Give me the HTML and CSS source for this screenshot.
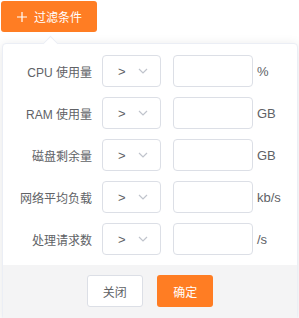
FILE: index.html
```html
<!DOCTYPE html>
<html lang="zh-CN">
<head>
    <meta charset="UTF-8">
    <title>过滤条件</title>
    <link rel="stylesheet" href="styles.css">
</head>
<body>
    <button class="btn-filter" type="button"><svg class="plus" width="10" height="10" viewBox="0 0 10 10"><path d="M5 0v10M0 5h10" stroke="#ffffff" stroke-width="1.2"/></svg>过滤条件</button>

    <div class="popover">
        <form class="filter-form">
            <div class="row">
                <label>CPU 使用量</label>
                <div class="select"><span>&gt;</span><svg width="10" height="6" viewBox="0 0 10 6"><path d="M1 1l4 4 4-4" fill="none" stroke="#c0c4cc" stroke-width="1.2"/></svg></div>
                <input type="text" class="value">
                <span class="unit">%</span>
            </div>
            <div class="row">
                <label>RAM 使用量</label>
                <div class="select"><span>&gt;</span><svg width="10" height="6" viewBox="0 0 10 6"><path d="M1 1l4 4 4-4" fill="none" stroke="#c0c4cc" stroke-width="1.2"/></svg></div>
                <input type="text" class="value">
                <span class="unit">GB</span>
            </div>
            <div class="row">
                <label>磁盘剩余量</label>
                <div class="select"><span>&gt;</span><svg width="10" height="6" viewBox="0 0 10 6"><path d="M1 1l4 4 4-4" fill="none" stroke="#c0c4cc" stroke-width="1.2"/></svg></div>
                <input type="text" class="value">
                <span class="unit">GB</span>
            </div>
            <div class="row">
                <label>网络平均负载</label>
                <div class="select"><span>&gt;</span><svg width="10" height="6" viewBox="0 0 10 6"><path d="M1 1l4 4 4-4" fill="none" stroke="#c0c4cc" stroke-width="1.2"/></svg></div>
                <input type="text" class="value">
                <span class="unit">kb/s</span>
            </div>
            <div class="row">
                <label>处理请求数</label>
                <div class="select"><span>&gt;</span><svg width="10" height="6" viewBox="0 0 10 6"><path d="M1 1l4 4 4-4" fill="none" stroke="#c0c4cc" stroke-width="1.2"/></svg></div>
                <input type="text" class="value">
                <span class="unit">/s</span>
            </div>
        </form>
        <div class="footer">
            <button type="button" class="btn btn-close">关闭</button>
            <button type="button" class="btn btn-ok">确定</button>
        </div>
    </div>
</body>
</html>
```

FILE: styles.css
```css
body {
    font-family: "Liberation Sans", "Noto Sans CJK SC", sans-serif;
    background-color: #ffffff;
    color: #606266;
    margin: 0;
    padding: 1px 0 0 1px;
    overflow: hidden;
}
.btn-filter {
    display: flex;
    align-items: center;
    width: 96px;
    height: 31px;
    background-color: #ff7d23;
    color: #ffffff;
    border: none;
    border-radius: 3px;
    font-family: inherit;
    font-size: 12px;
    padding: 0 0 0 16px;
    cursor: pointer;
}
.plus {
    margin-right: 7px;
}
.popover {
    position: relative;
    margin: 11px 0 0 1px;
    width: 296px;
    background-color: #ffffff;
    border: 1px solid #ebeef5;
    border-radius: 4px;
    box-shadow: 0 2px 12px rgba(0,0,0,0.1);
    box-sizing: border-box;
}
.popover::before {
    content: "";
    position: absolute;
    top: -6px;
    left: 42px;
    width: 10px;
    height: 10px;
    background-color: #ffffff;
    border-top: 1px solid #ebeef5;
    border-left: 1px solid #ebeef5;
    transform: rotate(45deg);
}
.filter-form {
    padding: 11px 0 0 9px;
}
.row {
    display: flex;
    align-items: center;
    height: 32px;
    margin-bottom: 10px;
}
.row label {
    width: 80px;
    text-align: right;
    font-size: 12px;
    margin-right: 10px;
    white-space: nowrap;
}
.select {
    display: flex;
    align-items: center;
    justify-content: space-between;
    width: 59px;
    height: 32px;
    padding: 0 12px 0 15px;
    border: 1px solid #dcdfe6;
    border-radius: 4px;
    box-sizing: border-box;
    font-size: 13px;
}
.value {
    width: 80px;
    height: 32px;
    margin-left: 12px;
    border: 1px solid #dcdfe6;
    border-radius: 4px;
    box-sizing: border-box;
    outline: none;
}
.unit {
    margin-left: 4px;
    font-size: 13px;
}
.footer {
    background-color: #f4f4f5;
    padding: 10px 0 12px;
    text-align: center;
}
.btn {
    width: 56px;
    height: 32px;
    border-radius: 3px;
    font-family: inherit;
    font-size: 12px;
    padding: 0;
    cursor: pointer;
}
.btn-close {
    background-color: #ffffff;
    color: #606266;
    border: 1px solid #dcdfe6;
    margin-right: 10px;
}
.btn-ok {
    background-color: #ff7d23;
    color: #ffffff;
    border: none;
}
```
